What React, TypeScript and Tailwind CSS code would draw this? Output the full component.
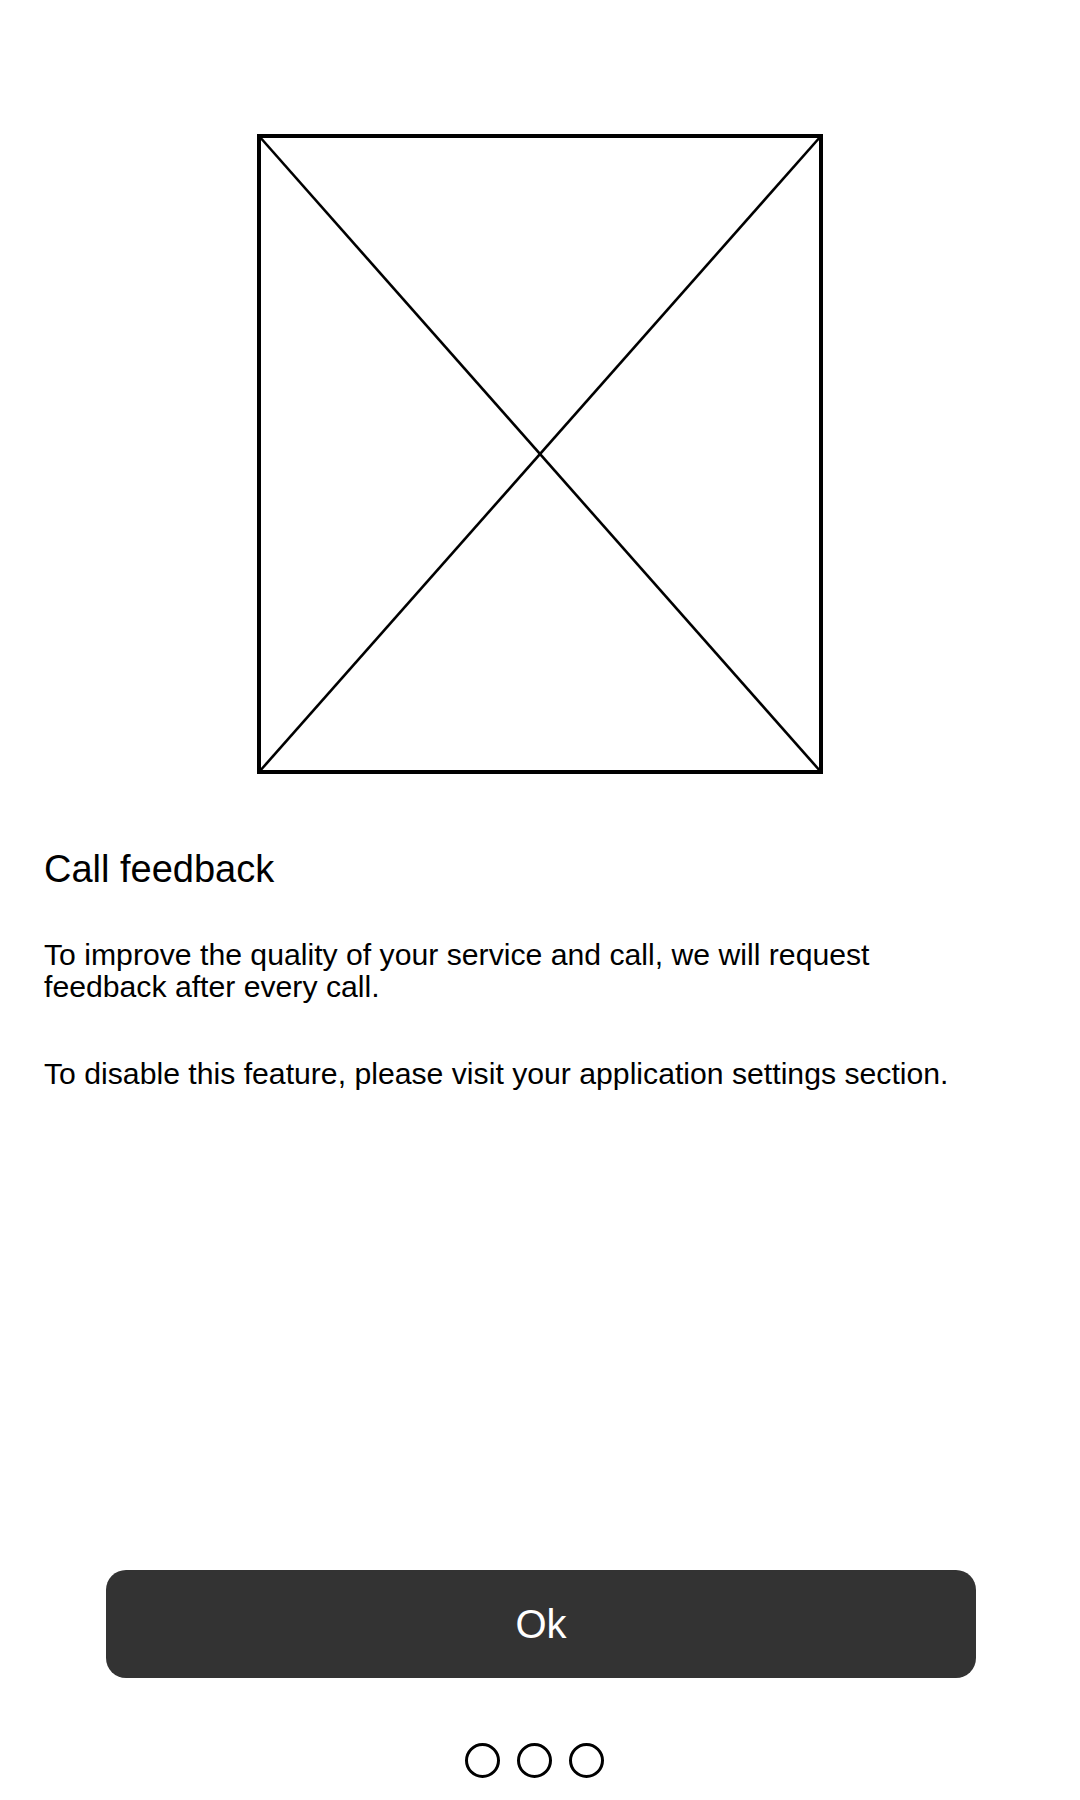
import React from "react";

export default function App() {
  return (
    <div
      className="w-[1080px] h-[1800px] bg-white flex flex-col text-black"
      style={{ fontFamily: '"Liberation Sans", Arial, sans-serif' }}
    >
      <div className="pt-[134px] flex justify-center">
        <svg width="566" height="640" viewBox="0 0 566 640" className="block">
          <rect x="2" y="2" width="562" height="636" fill="none" stroke="#000" strokeWidth="4" />
          <line x1="2" y1="2" x2="564" y2="638" stroke="#000" strokeWidth="2.6" />
          <line x1="564" y1="2" x2="2" y2="638" stroke="#000" strokeWidth="2.6" />
        </svg>
      </div>
      <div className="px-[44px]">
        <h1 className="mt-[76px] text-[38px] leading-[38px] font-normal">Call feedback</h1>
        <p className="mt-[51px] text-[30.2px] leading-[32px]">
          To improve the quality of your service and call, we will request
          <br />
          feedback after every call.
        </p>
        <p className="mt-[55px] text-[30.2px] leading-[32px]">
          To disable this feature, please visit your application settings section.
        </p>
      </div>
      <div className="mt-[480px] flex justify-center pl-[2px]">
        <button className="w-[870px] h-[108px] rounded-[20px] bg-[#333333] text-white text-[40px] leading-none">
          Ok
        </button>
      </div>
      <div className="mt-[65px] flex justify-center gap-[17px] pr-[12px]">
        <div className="w-[35px] h-[35px] rounded-full border-[3px] border-black" />
        <div className="w-[35px] h-[35px] rounded-full border-[3px] border-black" />
        <div className="w-[35px] h-[35px] rounded-full border-[3px] border-black" />
      </div>
    </div>
  );
}
